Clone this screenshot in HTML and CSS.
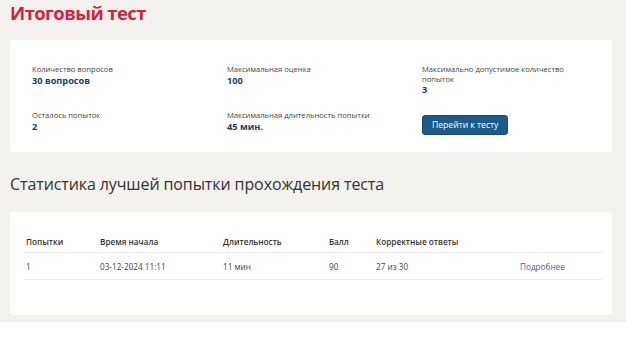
FILE: index.html
```html
<!DOCTYPE html>
<html lang="ru">
<head>
    <meta charset="UTF-8">
    <meta name="viewport" content="width=device-width, initial-scale=1.0">
    <title>Итоговый тест</title>
    <link rel="stylesheet" href="styles.css">
</head>
<body>
    <div class="page">
        <h1 class="title">Итоговый тест</h1>

        <div class="card info-card">
            <div class="info-grid">
                <div class="info-item">
                    <div class="info-label">Количество вопросов</div>
                    <div class="info-value">30 вопросов</div>
                </div>
                <div class="info-item">
                    <div class="info-label">Максимальная оценка</div>
                    <div class="info-value">100</div>
                </div>
                <div class="info-item">
                    <div class="info-label">Максимально допустимое количество попыток</div>
                    <div class="info-value">3</div>
                </div>
                <div class="info-item">
                    <div class="info-label">Осталось попыток</div>
                    <div class="info-value">2</div>
                </div>
                <div class="info-item">
                    <div class="info-label">Максимальная длительность попытки</div>
                    <div class="info-value">45 мин.</div>
                </div>
                <div class="info-item">
                    <button class="start-button">Перейти к тесту</button>
                </div>
            </div>
        </div>

        <h2 class="subtitle">Статистика лучшей попытки прохождения теста</h2>

        <div class="card stats-card">
            <table class="stats-table">
                <thead>
                    <tr>
                        <th class="col-attempt">Попытки</th>
                        <th class="col-start">Время начала</th>
                        <th class="col-duration">Длительность</th>
                        <th class="col-score">Балл</th>
                        <th class="col-correct">Корректные ответы</th>
                        <th></th>
                    </tr>
                </thead>
                <tbody>
                    <tr>
                        <td>1</td>
                        <td>03-12-2024 11:11</td>
                        <td>11 мин</td>
                        <td>90</td>
                        <td>27 из 30</td>
                        <td><a class="details-link" href="#">Подробнее</a></td>
                    </tr>
                </tbody>
            </table>
        </div>
    </div>
</body>
</html>
```

FILE: styles.css
```css
body {
    margin: 0;
    background-color: #fff;
    font-family: "Open Sans", Arial, sans-serif;
    color: #333;
}
.page {
    background-color: #f3f2ef;
    padding: 1px 14px 7px 10px;
    height: 314px;
}
.title {
    margin: 0 0 15px 0;
    font-size: 18.5px;
    line-height: 24px;
    font-weight: 700;
    color: #d81f3f;
    letter-spacing: -0.6px;
}
.card {
    background-color: #fff;
    border-radius: 3px;
}
.info-card {
    padding: 25px 0 22px 22px;
    height: 65px;
}
.info-grid {
    display: grid;
    grid-template-columns: repeat(3, 195px);
    row-gap: 16px;
}
.info-label {
    font-size: 7.6px;
    line-height: 9.5px;
    color: #444;
    padding-right: 30px;
}
.info-value {
    font-size: 9.2px;
    line-height: 11px;
    font-weight: 700;
    color: #1d3d66;
}
.start-button {
    padding: 0 9px;
    height: 20px;
    font-family: "Open Sans", Arial, sans-serif;
    font-size: 8.6px;
    color: #fff;
    background-color: #1d5a8c;
    border: 1px solid #184a74;
    border-radius: 3px;
}
.subtitle {
    margin: 20px 0 16px 0;
    font-size: 16px;
    line-height: 24px;
    font-weight: 400;
    color: #333;
    letter-spacing: -0.1px;
}
.stats-card {
    padding: 19px 10px 36px 14px;
    height: 48px;
}
.stats-table {
    width: 100%;
    border-collapse: collapse;
    font-size: 8.2px;
}
.stats-table th,
.stats-table td {
    text-align: left;
    padding: 0 2px;
    border-bottom: 1px solid #ebebeb;
}
.stats-table th {
    height: 21px;
    font-weight: 600;
    color: #333;
}
.stats-table td {
    height: 26px;
    color: #444;
}
.col-attempt { width: 70px; }
.col-start { width: 119px; }
.col-duration { width: 102px; }
.col-score { width: 43px; }
.col-correct { width: 140px; }
.details-link {
    color: #3a6896;
    text-decoration: none;
}
```
